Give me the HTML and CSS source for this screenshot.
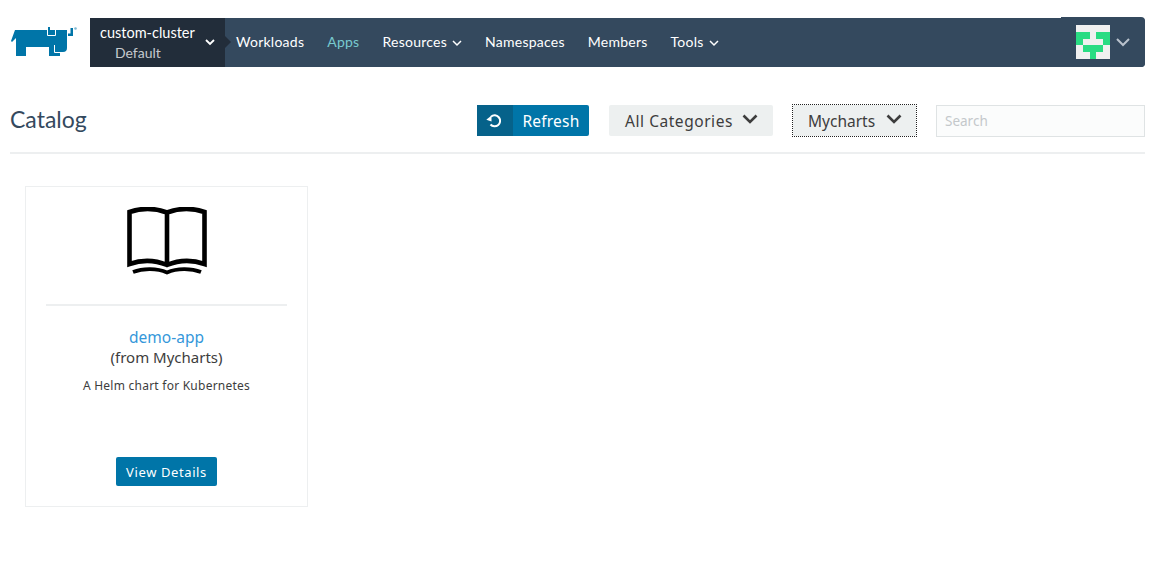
FILE: index.html
```html
<!DOCTYPE html>
<html lang="en">
<head>
    <meta charset="UTF-8">
    <title>Catalog</title>
    <link rel="stylesheet" href="styles.css">
</head>
<body>
    <header class="topbar">
        <a class="logo" href="#">
            <svg width="70" height="32" viewBox="0 0 70 32">
                <path fill="#0075a8" d="M1 15 L5 4 H37 V1 H40 V4 H57 V22 Q57 26 53 26 H50 V30 H39 V21 H16 V30 H6 V12 L2 16 Z"/>
                <path fill="#0075a8" d="M60.500 2 H63 V10 H58 V7.500 H60.500 Z"/>
                <path fill="none" stroke="#fff" stroke-width="1" d="M37.500 0 V9.500 H45.500 V4 M44.500 19 V26.500 H52"/>
                <circle cx="65.500" cy="2.500" r="1.300" fill="#7fb8d3"/>
            </svg>
        </a>
        <nav class="nav">
            <div class="cluster">
                <div class="cluster-text">
                    <div class="cluster-name">custom-cluster</div>
                    <div class="cluster-project">Default</div>
                </div>
                <svg class="chev" width="10" height="7" viewBox="0 0 10 7"><path d="M1 1 L5 5 L9 1" fill="none" stroke="#fff" stroke-width="1.800"/></svg>
                <span class="cluster-arrow"></span>
            </div>
            <ul class="menu">
                <li><a href="#">Workloads</a></li>
                <li><a class="active" href="#">Apps</a></li>
                <li><a href="#">Resources<svg class="chev" width="10" height="7" viewBox="0 0 10 7"><path d="M1 1 L5 5 L9 1" fill="none" stroke="#fff" stroke-width="1.500"/></svg></a></li>
                <li><a href="#">Namespaces</a></li>
                <li><a href="#">Members</a></li>
                <li><a href="#">Tools<svg class="chev" width="10" height="7" viewBox="0 0 10 7"><path d="M1 1 L5 5 L9 1" fill="none" stroke="#fff" stroke-width="1.500"/></svg></a></li>
            </ul>
            <div class="user">
                <svg width="34" height="34" viewBox="0 0 5 5" shape-rendering="crispEdges">
                    <rect width="5" height="5" fill="#f0f0f0"/>
                    <path fill="#29dc83" d="M0 1 H2 V2 H1 V3 H0 Z M3 1 H5 V3 H4 V2 H3 Z M1 3 H4 V4 H3 V5 H2 V4 H1 Z"/>
                </svg>
                <svg width="14" height="9" viewBox="0 0 14 9"><path d="M1 1 L7 7 L13 1" fill="none" stroke="#b9c2cc" stroke-width="2"/></svg>
            </div>
        </nav>
    </header>

    <main class="page">
        <div class="page-header">
            <h1>Catalog</h1>
            <div class="actions">
                <button class="btn-refresh"><span class="refresh-icon"><svg width="16" height="16" viewBox="0 0 16 16"><path d="M6 3.700 A5.500 5.500 0 1 1 5.500 11.500" fill="none" stroke="#fff" stroke-width="2"/><path d="M1.300 6.700 L6.500 2.500 V8.500 Z" fill="#fff"/></svg></span><span class="refresh-label">Refresh</span></button>
                <button class="btn-select wide"><span>All Categories</span><svg width="16" height="10" viewBox="0 0 16 10"><path d="M1.500 1.500 L8 8 L14.500 1.500" fill="none" stroke="#3d3d3d" stroke-width="2.600"/></svg></button>
                <button class="btn-select focused"><span>Mycharts</span><svg width="16" height="10" viewBox="0 0 16 10"><path d="M1.500 1.500 L8 8 L14.500 1.500" fill="none" stroke="#3d3d3d" stroke-width="2.600"/></svg></button>
                <input class="search" type="text" placeholder="Search">
            </div>
        </div>

        <section class="cards">
            <article class="card">
                <div class="card-icon">
                    <svg width="80" height="68" viewBox="0 0 80 68">
                        <path d="M2.500 5 C14 1 28 1 40 5.500 C52 1 66 1 77.500 5 V57 C66 53 52 53 40 58 C28 53 14 53 2.500 57 Z M40 5.500 V58" fill="none" stroke="#000" stroke-width="4.600"/>
                        <path d="M6 65 C16 61 30 61 40 65.500 C50 61 64 61 74 65" fill="none" stroke="#000" stroke-width="3.800"/>
                    </svg>
                </div>
                <div class="card-body">
                    <a class="card-title" href="#">demo-app</a>
                    <div class="card-source">(from Mycharts)</div>
                    <p class="card-desc">A Helm chart for Kubernetes</p>
                </div>
                <button class="btn-details">View Details</button>
            </article>
        </section>
    </main>
</body>
</html>
```

FILE: styles.css
```css
* {
    box-sizing: border-box;
}

body {
    margin: 0;
    font-family: "Noto Sans", sans-serif;
    color: #3d3d3d;
    background: #fff;
}

.topbar {
    display: flex;
    height: 49px;
    margin: 18px 16px 0 10px;
}

.logo {
    width: 80px;
    padding-top: 8px;
}

.nav {
    flex: 1;
    display: flex;
    align-items: center;
    background: #34495e;
    border-radius: 0 4px 4px 0;
    color: #fff;
    font-family: Lato, sans-serif;
    font-size: 14px;
}

.cluster {
    position: relative;
    display: flex;
    align-items: center;
    width: 135px;
    height: 100%;
    padding-left: 10px;
    background: #222d3a;
}

.cluster-text {
    width: 105px;
}

.cluster-name {
    font-size: 14.500px;
    line-height: 21px;
}

.cluster-project {
    margin-top: -1px;
    line-height: 21px;
    padding-left: 15px;
    font-size: 14px;
    color: #c5c9ce;
}

.cluster-arrow {
    position: absolute;
    right: -6px;
    top: 18px;
    border-left: 6px solid #222d3a;
    border-top: 6px solid transparent;
    border-bottom: 6px solid transparent;
}

.menu {
    display: flex;
    gap: 23px;
    list-style: none;
    margin: 0 0 2px 11px;
    padding: 0;
    letter-spacing: 0.25px;
}

.menu a {
    color: #fff;
    text-decoration: none;
}

.menu a.active {
    color: #78c9cf;
}

.menu .chev {
    margin-left: 5px;
}

.user {
    display: flex;
    align-items: center;
    gap: 6px;
    align-self: flex-start;
    width: 84px;
    height: 50px;
    margin: -1px 0 0 auto;
    padding-left: 15px;
    background: #34495e;
    border-radius: 0 4px 4px 0;
}

.page {
    padding: 0 16px 0 10px;
}

.page-header {
    display: flex;
    align-items: center;
    justify-content: space-between;
    height: 87px;
    padding-top: 19px;
    border-bottom: 2px solid #edeff0;
}

h1 {
    margin: 0;
    font-family: Lato, sans-serif;
    font-size: 23px;
    font-weight: 400;
    color: #34495e;
}

.actions {
    display: flex;
    align-items: center;
    height: 32px;
    margin-top: 3px;
}

button {
    font-family: inherit;
    border: none;
}

.btn-refresh {
    display: flex;
    width: 112px;
    height: 31px;
    padding: 0;
    background: #0075a8;
    border-radius: 2px;
    color: #fff;
    font-size: 15.500px;
}

.refresh-icon {
    display: flex;
    align-items: center;
    justify-content: center;
    width: 36px;
    height: 100%;
    padding-right: 4px;
    background: #06628a;
}

.refresh-label {
    flex: 1;
    padding-top: 1px;
    line-height: 31px;
    letter-spacing: 0.2px;
}

.btn-select {
    display: flex;
    align-items: center;
    gap: 11px;
    height: 31px;
    margin-left: 20px;
    padding: 1px 0 0 15px;
    background: #edf0f0;
    border-radius: 2px;
    font-size: 15.500px;
    color: #3d3d3d;
}

.btn-select svg {
    margin-top: -5px;
}

.btn-select.wide {
    width: 164px;
    padding-left: 16px;
    gap: 9px;
    letter-spacing: 0.55px;
}

.btn-select.focused {
    width: 123px;
    outline: 1px dotted #222;
    border-radius: 0;
}

.search {
    width: 209px;
    height: 32px;
    margin-left: 20px;
    padding: 0 8px;
    background: #fbfcfc;
    border: 1px solid #dfe3e4;
    font-family: inherit;
    font-size: 13.500px;
}

.search::placeholder {
    color: #c4c8cb;
}

.cards {
    padding: 32px 0 0 15px;
}

.card {
    display: flex;
    flex-direction: column;
    align-items: center;
    width: 283px;
    height: 321px;
    border: 1px solid #edeff0;
}

.card-icon {
    display: flex;
    justify-content: center;
    width: 241px;
    height: 119px;
    padding-top: 20px;
    border-bottom: 2px solid #edeff0;
}

.card-body {
    flex: 1;
    padding-top: 21px;
    text-align: center;
}

.card-title {
    display: block;
    font-size: 15.500px;
    line-height: 20px;
    color: #3497da;
    text-decoration: none;
}

.card-source {
    font-size: 15px;
    line-height: 20px;
}

.card-desc {
    margin: 10px 0 0;
    font-size: 12px;
    line-height: 18px;
    letter-spacing: 0.24px;
}

.btn-details {
    width: 101px;
    height: 29px;
    margin-bottom: 20px;
    background: #0075a8;
    border-radius: 2px;
    color: #fff;
    font-size: 13px;
    letter-spacing: 0.6px;
}
```
